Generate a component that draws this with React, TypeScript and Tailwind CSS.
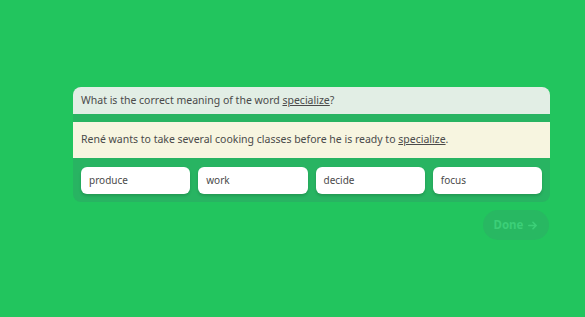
import React from "react";

const options = ["produce", "work", "decide", "focus"];

export default function App() {
  return (
    <div
      className="w-[585px] h-[317px] bg-[#22c55e] text-[#4a4a4a]"
      style={{ fontFamily: '"Noto Sans", Lato, sans-serif' }}
    >
      <div className="pt-[87px] pl-[73px]">
        <div className="w-[477px] rounded-lg bg-[#28b462] overflow-hidden">
          <div className="h-[27px] bg-[#e2eee5] flex items-center px-2 text-[10.5px]">
            What is the correct meaning of the word&nbsp;<span className="underline">specialize</span>?
          </div>
          <div className="mt-2 h-[36px] bg-[#f7f5e0] flex items-center px-2 text-[10.5px]">
            René wants to take several cooking classes before he is ready to&nbsp;
            <span className="underline">specialize</span>.
          </div>
          <div className="grid grid-cols-4 gap-2 p-2 pt-[9px]">
            {options.map(o => (
              <button
                key={o}
                className="h-[27px] rounded-md bg-white text-left px-2 text-[10px] shadow-[0_2px_3px_rgba(0,0,0,0.15)]"
              >
                {o}
              </button>
            ))}
          </div>
        </div>
        <div className="w-[477px] flex justify-end mt-2">
          <button className="mr-[1px] h-[30px] w-[66px] rounded-full bg-[#28b862] text-[#3ccf78] text-[11.5px] font-bold flex items-center justify-center gap-1">
            Done
            <svg width="11" height="11" viewBox="0 0 24 24" fill="none" stroke="currentColor" strokeWidth="3.5" strokeLinecap="round" strokeLinejoin="round">
              <path d="M4 12h15M13 5l7 7-7 7" />
            </svg>
          </button>
        </div>
      </div>
    </div>
  );
}
